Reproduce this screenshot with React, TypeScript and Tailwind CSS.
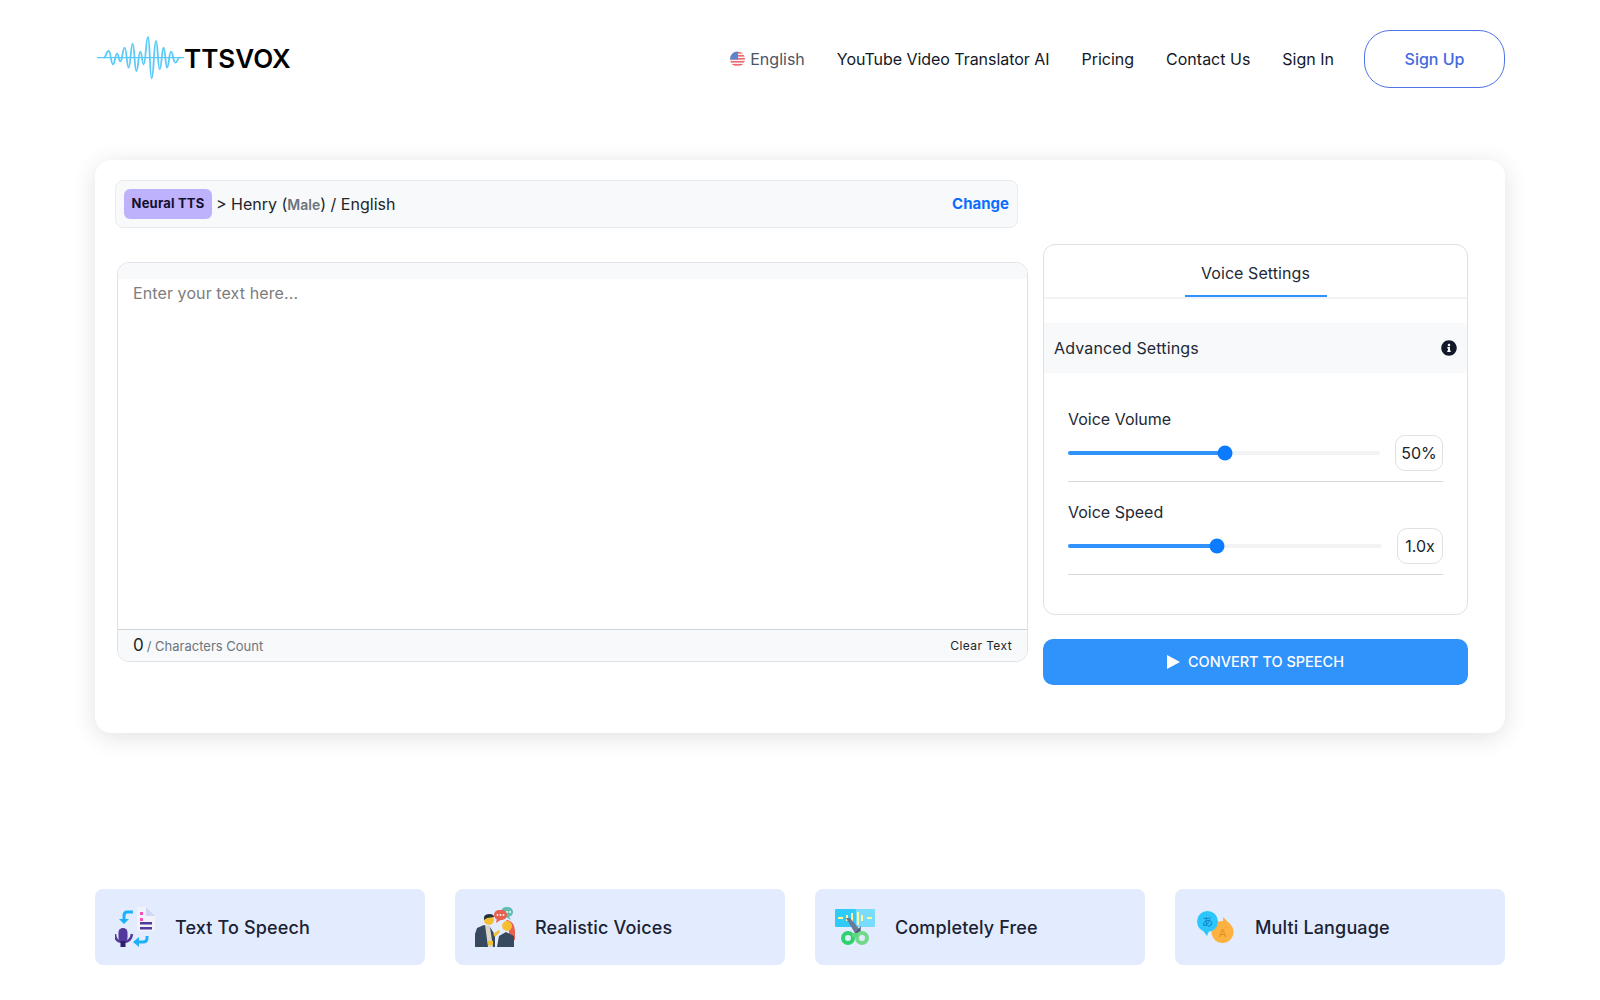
import { FaInfoCircle } from 'react-icons/fa';

const wavePoints: [number, number][] = [
  [70, 115], [85, 95], [98, 135], [110, 103], [120, 126], [133, 85], [145, 145], [157, 73],
  [168, 155], [180, 97], [190, 135], [203, 53], [214, 177], [227, 65], [238, 150], [250, 85],
  [260, 145], [272, 97], [285, 130], [298, 115],
];

function wavePath() {
  // Smooth curve through the extrema, with flat tangents at each one
  return wavePoints.reduce((path, [x, y], index) => {
    if (index === 0) return `M${x} ${y}`;
    const [px, py] = wavePoints[index - 1];
    const mid = (px + x) / 2;
    return `${path} C${mid} ${py} ${mid} ${y} ${x} ${y}`;
  }, '');
}

function Logo() {
  return (
    <div className="flex items-center">
      <svg width="87" height="46" viewBox="50 50 261 138" className="shrink-0">
        <path d="M50 115H311" stroke="#5ccbf9" strokeWidth="4" fill="none" />
        <path d={wavePath()} stroke="#5ccbf9" strokeWidth="5.5" fill="none" />
      </svg>
      <span className="text-[26px] font-semibold leading-none text-black">TTSVOX</span>
    </div>
  );
}

function UsFlag() {
  return (
    <svg width="15" height="16" viewBox="0 0 15 16">
      <defs>
        <clipPath id="flagClip">
          <ellipse cx="7.5" cy="8" rx="7.5" ry="7.5" />
        </clipPath>
      </defs>
      <g clipPath="url(#flagClip)">
        <rect width="15" height="16" fill="#f2f2f4" />
        {[1, 4, 7, 10, 13].map(y => (
          <rect key={y} x="0" y={y} width="15" height="1.6" fill="#ee6a70" />
        ))}
        <rect width="8" height="8.5" fill="#5b86c9" />
      </g>
    </svg>
  );
}

function SpeechIcon() {
  return (
    <svg width="40" height="40" viewBox="0 0 40 40">
      <path d="M22 0H31L40 9V24H22Z" fill="#f2f2fb" />
      <path d="M31 0L40 9H31Z" fill="#cfd6f6" />
      <rect x="25" y="5" width="3" height="3" fill="#f04fc0" />
      <rect x="25" y="11" width="3" height="3" fill="#f04fc0" />
      <rect x="25" y="15" width="12" height="2.5" fill="#53399b" />
      <rect x="25" y="20" width="12" height="2.5" fill="#53399b" />
      <path d="M18 5H12Q9 5 9 9V13" stroke="#1cb1fb" strokeWidth="3" fill="none" />
      <path d="M4 12H14L9 17Z" fill="#1cb1fb" />
      <path d="M32 29V31Q32 35 28 35H23" stroke="#1cb1fb" strokeWidth="3" fill="none" />
      <path d="M24 30V40L18 35Z" fill="#1cb1fb" />
      <rect x="3.5" y="21" width="9" height="14" rx="4.5" fill="#53399b" />
      <path d="M0 27Q0 35 8 35Q16 35 17 27" stroke="#53399b" strokeWidth="2.5" fill="none" />
      <rect x="5.5" y="34" width="5" height="6" fill="#2d1f6e" />
    </svg>
  );
}

function VoicesIcon() {
  return (
    <svg width="40" height="40" viewBox="0 0 40 40">
      {/* Speech bubbles */}
      <rect x="26" y="0" width="12" height="10" rx="5" fill="#62bfb0" />
      <path d="M33 8L36 13L29 9Z" fill="#62bfb0" />
      <circle cx="32" cy="5" r="0.9" fill="#fff" />
      <circle cx="35" cy="5" r="0.9" fill="#fff" />
      <rect x="19" y="3" width="13" height="10" rx="5" fill="#e8604f" />
      <path d="M22 11L21 16L27 12Z" fill="#e8604f" />
      <circle cx="22.5" cy="8" r="0.9" fill="#fff" />
      <circle cx="25.5" cy="8" r="0.9" fill="#fff" />
      <circle cx="28.5" cy="8" r="0.9" fill="#fff" />
      {/* Woman */}
      <path d="M31 13Q39 13 40 24V33H34V20Z" fill="#e8604f" />
      <path d="M22 40L24 29L31 25L39 29V40Z" fill="#36495e" />
      <circle cx="32" cy="19" r="5" fill="#f5bf31" />
      {/* Man */}
      <path d="M2 21L9 18L15 20L20 28V40H0V27Z" fill="#36495e" />
      <path d="M10 18L15 20L18 40H13Z" fill="#d9d4c5" />
      <circle cx="14" cy="13" r="5" fill="#f5bf31" />
      <path d="M9 13Q8 7 14 7Q19 7 19 10L12 11Z" fill="#25313f" />
      <path d="M18 27L24 23L25 25L20 30Z" fill="#f5bf31" />
      <path d="M13 34H18V38H13Z" fill="#f5bf31" />
    </svg>
  );
}

function CutterIcon() {
  return (
    <svg width="40" height="36" viewBox="0 0 40 36">
      <rect width="21" height="18" rx="1" fill="#2ecbfb" />
      <path d="M21 0H39Q40 0 40 1V17Q40 18 39 18H21Z" fill="#7adcfc" />
      <rect x="3" y="8" width="5" height="2" fill="#fff59d" />
      <rect x="11" y="6" width="2" height="6" fill="#fff59d" />
      <rect x="16" y="4" width="2" height="10" fill="#fff59d" />
      <rect x="22" y="3" width="2" height="13" fill="#fff59d" />
      <rect x="26" y="6" width="2" height="6" fill="#fff59d" />
      <rect x="32" y="8" width="5" height="2" fill="#fff59d" />
      <path d="M11 9L15 9L26 22L21 26Z" fill="#6a7a96" />
      <path d="M26 17L25 26L20 24Z" fill="#4e5c78" />
      <circle cx="13" cy="29" r="5" fill="none" stroke="#2ed36e" strokeWidth="4" />
      <circle cx="27" cy="29" r="5" fill="none" stroke="#72d98a" strokeWidth="4" />
      <rect x="17" y="24" width="6" height="4" fill="#5bd880" />
    </svg>
  );
}

function LanguageIcon() {
  return (
    <svg width="37" height="32" viewBox="0 0 37 32">
      <path d="M26 6L33 13L26 13Z" fill="#fdb140" />
      <circle cx="25.5" cy="21" r="11" fill="#fdb140" />
      <text x="25.5" y="26" textAnchor="middle" fontSize="11" fill="#e28f25" fontFamily="Inter, sans-serif">A</text>
      <path d="M4 17L10 25L12 20Z" fill="#2dc6fb" />
      <circle cx="10.5" cy="10.5" r="10.5" fill="#2dc6fb" />
      <text x="10.5" y="15" textAnchor="middle" fontSize="11" fill="#0c7fc4" fontFamily="'Noto Sans CJK JP', sans-serif">あ</text>
    </svg>
  );
}

function VoiceSlider({ label, value, percent, trackClass, boxClass }: {
  label: string;
  value: string;
  percent: number;
  trackClass: string;
  boxClass: string;
}) {
  return (
    <div className="h-[93px] border-b border-[#d6d8db] pt-[19px]">
      <div className="h-[22px] text-base leading-[22px] text-[#212936]">{label}</div>
      <div className="mt-[5px] flex h-9 items-center justify-between">
        <div className={`relative h-1 rounded-full bg-[#f1f3f5] ${trackClass}`}>
          <div className="h-full rounded-full bg-[#3092fb]" style={{ width: `${percent}%` }} />
          <div
            className="absolute top-1/2 h-[15px] w-[15px] -translate-x-1/2 -translate-y-1/2 rounded-full bg-[#0d7bff]"
            style={{ left: `${percent}%` }}
          />
        </div>
        <div className={`flex h-9 items-center justify-center rounded-[10px] border border-[#dee2e6] text-base text-[#212529] ${boxClass}`}>
          {value}
        </div>
      </div>
    </div>
  );
}

const features = [
  { title: 'Text To Speech', icon: <SpeechIcon /> },
  { title: 'Realistic Voices', icon: <VoicesIcon /> },
  { title: 'Completely Free', icon: <CutterIcon /> },
  { title: 'Multi Language', icon: <LanguageIcon /> },
];

export default function App() {
  return (
    <div className="min-h-[1000px] bg-white font-['Inter',sans-serif]">
      <div className="mx-auto w-[1410px]">
        {/* Header */}
        <header className="flex h-[160px] items-start justify-between pt-[30px]">
          <div className="flex h-[58px] items-center pl-0.5">
            <Logo />
          </div>
          <nav className="flex h-[58px] items-center text-base text-[#111827]">
            <span className="flex items-center gap-[5px] text-[#4b5563]">
              <UsFlag />
              English
            </span>
            <span className="ml-8 tracking-[-0.05px]">YouTube Video Translator AI</span>
            <span className="ml-8">Pricing</span>
            <span className="ml-8">Contact Us</span>
            <span className="ml-8">Sign In</span>
            <span className="ml-[30px] flex h-[58px] w-[141px] items-center justify-center rounded-[26px] border border-[#4f74e3] font-medium text-[#4169e1]">
              Sign Up
            </span>
          </nav>
        </header>

        {/* Main card */}
        <main className="h-[573px] rounded-2xl bg-white pl-5 pt-5 shadow-[0_4px_24px_rgba(0,0,0,0.12)]">
          <div className="flex h-12 w-[903px] items-center justify-between rounded-lg border border-[#e9ecef] bg-[#f8f9fa] pl-[8px] pr-[8px]">
            <div className="flex items-center text-base text-[#212529]">
              <span className="flex h-[30px] w-[88px] items-center justify-center rounded-md bg-[#bdb2fb] text-[13px] font-bold tracking-[0.2px] text-[#14102e]">
                Neural TTS
              </span>
              <span className="ml-[4px]">
                &gt; Henry (<span className="text-sm font-semibold text-[#6c757d]">Male</span>) / English
              </span>
            </div>
            <span className="text-[15px] font-bold text-[#0d6efd]">Change</span>
          </div>

          <div className="mt-4 flex">
            <div className="w-[928px] pl-0.5 pt-[18px]">
              <div className="w-[911px] overflow-hidden rounded-xl border border-[#dee2e6]">
                <div className="h-4 bg-[#f8f9fa]" />
                <textarea
                  className="block h-[350px] w-full resize-none px-[15px] text-base leading-7 tracking-[0.1px] text-[#212529] outline-none placeholder:text-[#7d7d7d]"
                  placeholder="Enter your text here..."
                />
                <div className="flex h-8 items-center justify-between border-t border-[#ced4da] bg-[#f8f9fa] pl-[15px] pr-[15px]">
                  <div className="flex items-baseline gap-[3px]">
                    <span className="text-[17px] text-[#212529]">0</span>
                    <span className="text-[13px] text-[#6c757d]">/ Characters Count</span>
                  </div>
                  <span className="text-xs tracking-[0.4px] text-[#212529]">Clear Text</span>
                </div>
              </div>
            </div>

            <div className="w-[425px]">
              <div className="h-[371px] rounded-xl border border-[#dee2e6]">
                <div className="flex h-[54px] justify-center border-b-2 border-[#f1f3f5]">
                  <div className="flex h-[52px] w-[142px] items-center justify-center border-b-2 border-[#3092fb] pt-[6px] text-base tracking-[0.08px] text-[#212936]">
                    Voice Settings
                  </div>
                </div>
                <div className="mt-6 flex h-[50px] items-center justify-between bg-[#f8f9fa] pl-2.5 pr-2.5 text-base tracking-[0.15px] text-[#212936]">
                  Advanced Settings
                  <FaInfoCircle className="text-base text-[#111827]" />
                </div>
                <div className="mx-6 mt-4">
                  <VoiceSlider label="Voice Volume" value="50%" percent={50.3} trackClass="w-[312px]" boxClass="w-12" />
                  <VoiceSlider label="Voice Speed" value="1.0x" percent={47.5} trackClass="w-[314px]" boxClass="w-[46px]" />
                </div>
              </div>
              <button className="mt-6 flex h-[46px] w-full items-center justify-center gap-2 rounded-[10px] bg-[#3092fb] text-[14.5px] font-medium text-white">
                <svg width="13" height="14" viewBox="0 0 13 14">
                  <path d="M0 0L13 7L0 14Z" fill="#fff" />
                </svg>
                CONVERT TO SPEECH
              </button>
            </div>
          </div>
        </main>

        {/* Features */}
        <section className="mt-[156px] grid grid-cols-4 gap-[30px]">
          {features.map(feature => (
            <div key={feature.title} className="flex h-[76px] items-center rounded-lg bg-[#e3ecfe] pl-5">
              <div className="flex h-10 w-10 items-center justify-center">{feature.icon}</div>
              <span className="ml-5 pt-px text-lg font-medium tracking-[0.15px] text-[#1a2233]">{feature.title}</span>
            </div>
          ))}
        </section>
      </div>
    </div>
  );
}
